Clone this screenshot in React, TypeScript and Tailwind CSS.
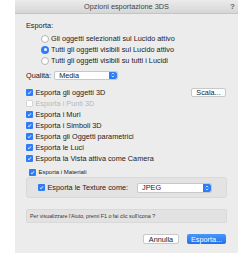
import React from 'react';

function Radio({ checked, label }:{ checked?: boolean, label: string }): React.ReactElement {
  return (
    <div className="flex items-center h-[11px] pl-[15px] gap-[2px]">
      {checked ? (
        <div className="w-[8px] h-[8px] rounded-full bg-[#2f7df6] flex items-center justify-center">
          <div className="w-[3px] h-[3px] rounded-full bg-white"/>
        </div>
      ) : (
        <div className="w-[8px] h-[8px] rounded-full bg-white border border-[#b5b5b5]"/>
      )}
      <span>{label}</span>
    </div>
  )
}

function Check({ checked, disabled, label }:{ checked?: boolean, disabled?: boolean, label: string }): React.ReactElement {
  return (
    <div className={"flex items-center gap-[3px] " + (disabled ? "text-[#b9b9b9]" : "")}>
      {checked ? (
        <div className="w-[6.5px] h-[6.5px] rounded-[1px] bg-[#2f7df6] flex items-center justify-center">
          <svg width="5" height="5" viewBox="0 0 10 10">
            <path d="M2 5.5 L4.2 7.5 L8 2.5" stroke="white" strokeWidth="1.8" fill="none"/>
          </svg>
        </div>
      ) : (
        <div className={"w-[6.5px] h-[6.5px] rounded-[1px] bg-white border " + (disabled ? "border-[#d6d6d6]" : "border-[#b5b5b5]")}/>
      )}
      <span>{label}</span>
    </div>
  )
}

function Select({ value, className }:{ value: string, className: string }): React.ReactElement {
  return (
    <div className={"flex items-stretch bg-white border border-[#c8c8c8] rounded-[2px] " + className}>
      <span className="flex-1 pl-[4px] leading-[8px]">{value}</span>
      <div className="w-[8px] bg-[#2f7df6] rounded-r-[2px] flex flex-col items-center justify-center">
        <svg width="4" height="6" viewBox="0 0 8 12">
          <path d="M1.5 4.5 L4 2 L6.5 4.5 M1.5 7.5 L4 10 L6.5 7.5" stroke="white" strokeWidth="1.4" fill="none"/>
        </svg>
      </div>
    </div>
  )
}

export default function App(): React.ReactElement {
  return (
    <div className="w-[252px] h-[263px] bg-white text-[#222] text-[7.3px] leading-[11px]"
      style={{fontFamily:'"Liberation Sans", Arial, sans-serif'}}>
      <div className="ml-[15px] w-[223px] h-[253px] bg-[#ececec] flex flex-col">
        <div className="h-[14px] relative flex items-center justify-center bg-gradient-to-b from-[#ebebeb] to-[#d6d6d6] border-b border-[#c4c4c4] text-[#444]">
          <span>Opzioni esportazione 3DS</span>
          <span className="absolute right-[3px] top-[1px] text-[8px] font-bold text-[#666]">?</span>
        </div>
        <div className="px-[11px] flex flex-col">
          <div className="mt-[6px] h-[11px] flex items-center">Esporta:</div>
          <div className="mt-[2px] flex flex-col">
            <Radio label="Gli oggetti selezionati sul Lucido attivo"/>
            <Radio checked label="Tutti gli oggetti visibili sul Lucido attivo"/>
            <Radio label="Tutti gli oggetti visibili su tutti i Lucidi"/>
          </div>
          <div className="mt-[4px] h-[10px] flex items-center gap-[3px]">
            <span>Qualità:</span>
            <Select value="Media" className="w-[64px] h-[9px]"/>
          </div>
          <div className="mt-[7px] flex flex-col">
            <div className="h-[11px] flex items-center justify-between pr-[1px]">
              <Check checked label="Esporta gli oggetti 3D"/>
              <div className="w-[35px] h-[9px] bg-white border border-[#c8c8c8] rounded-[2px] flex items-center justify-center">Scala...</div>
            </div>
            <div className="h-[11px] flex items-center"><Check disabled label="Esporta i Punti 3D"/></div>
            <div className="h-[11px] flex items-center"><Check checked label="Esporta i Muri"/></div>
            <div className="h-[11px] flex items-center"><Check checked label="Esporta i Simboli 3D"/></div>
            <div className="h-[11px] flex items-center"><Check checked label="Esporta gli Oggetti parametrici"/></div>
            <div className="h-[11px] flex items-center"><Check checked label="Esporta le Luci"/></div>
            <div className="h-[11px] flex items-center"><Check checked label="Esporta la Vista attiva come Camera"/></div>
          </div>
          <div className="mt-[4px] h-[9px] flex items-center pl-[3px] text-[6px]">
            <Check checked label="Esporta i Materiali"/>
          </div>
          <div className="h-[21px] bg-[#e3e3e3] border border-[#d9d9d9] rounded-[3px] flex items-center pl-[11px] pr-[14px] justify-between">
            <Check checked label="Esporta le Texture come:"/>
            <Select value="JPEG" className="w-[75px] h-[10px]"/>
          </div>
          <div className="mt-[11px] h-[14px] bg-[#e2e2e2] border border-[#d9d9d9] rounded-[2px] flex items-center pl-[3px] text-[5.3px] text-[#333]">
            Per visualizzare l'Aiuto, premi F1 o fai clic sull'icona ?
          </div>
          <div className="mt-[11px] flex justify-end gap-[8px] pr-[1px]">
            <div className="w-[36px] h-[10px] bg-white border border-[#c8c8c8] rounded-[2px] flex items-center justify-center">Annulla</div>
            <div className="w-[39px] h-[10px] bg-gradient-to-b from-[#4a97fa] to-[#1f6ff2] text-white rounded-[2px] flex items-center justify-center">Esporta...</div>
          </div>
        </div>
      </div>
    </div>
  )
}
